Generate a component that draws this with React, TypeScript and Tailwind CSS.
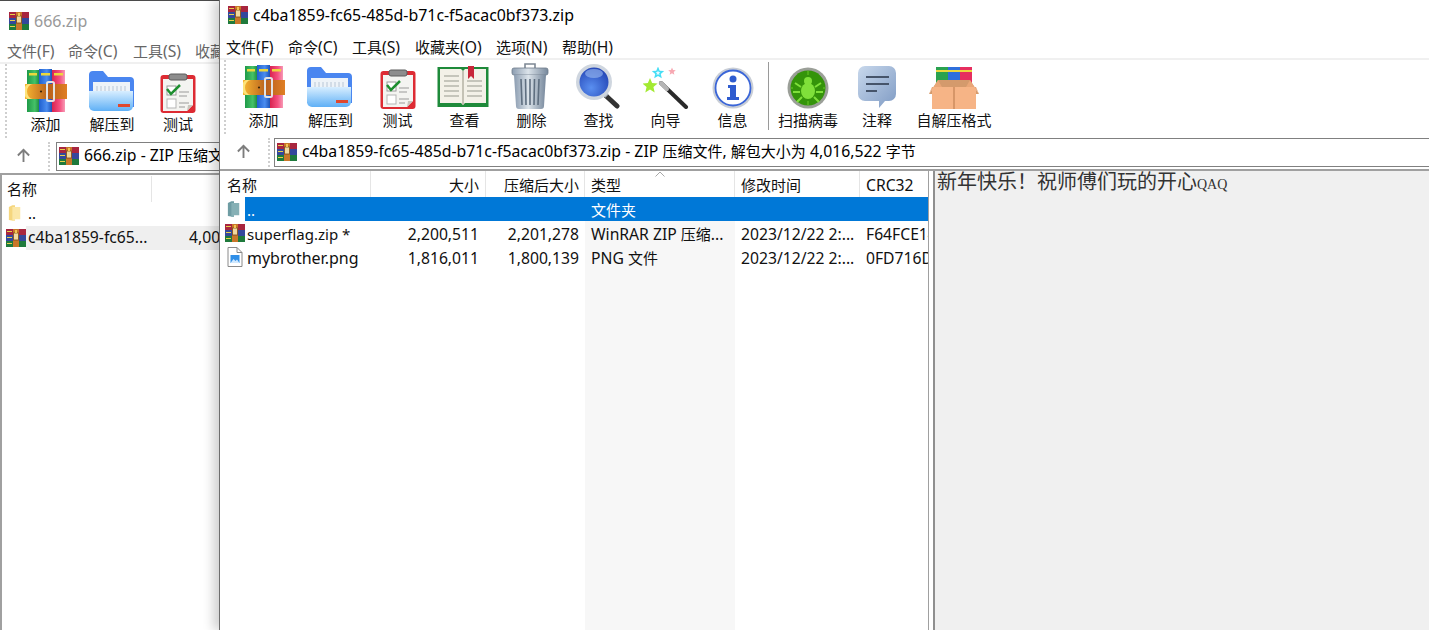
import type { ReactNode } from 'react';

const uiFont = { fontFamily: '"Noto Sans", "Noto Sans CJK SC", sans-serif' };

// Latin runs sit a little larger than CJK runs in the original UI font
function Mixed({ text, latin = 'text-[15.7px]' }: { text: string; latin?: string }) {
  return (
    <>
      {text.split(/([\u4e00-\u9fff]+)/).map((part, i) =>
        i % 2 === 1 ? (
          <span key={i} className="text-[15px]">{part}</span>
        ) : (
          <span key={i} className={latin}>{part}</span>
        ),
      )}
    </>
  );
}

function starPoints(cx: number, cy: number, r: number) {
  const pts: string[] = [];
  for (let i = 0; i < 10; i++) {
    const a = -Math.PI / 2 + (i * Math.PI) / 5;
    const d = i % 2 === 0 ? r : r * 0.45;
    pts.push(`${cx + d * Math.cos(a)},${cy + d * Math.sin(a)}`);
  }
  return pts.join(' ');
}

function RarSmall({ className }: { className?: string }) {
  return (
    <svg viewBox="0 0 20 18" className={className}>
      <rect x="0" y="0" width="20" height="6" fill="#a8263f" />
      <rect x="0" y="6" width="20" height="6" fill="#34489c" />
      <rect x="0" y="12" width="20" height="6" fill="#1f7a3c" />
      <rect x="1" y="2" width="5" height="1" fill="#e8d24a" />
      <rect x="1" y="8" width="5" height="1" fill="#e8d24a" />
      <rect x="1" y="14" width="5" height="1" fill="#e8d24a" />
      <rect x="7" y="0" width="6" height="18" fill="#c9772a" />
      <rect x="7.5" y="4" width="5" height="7" fill="#f1d9a0" stroke="#7a4a18" strokeWidth="0.8" />
      <rect x="9" y="1" width="2" height="3" fill="#f3c552" />
    </svg>
  );
}

function RarIcon() {
  return (
    <svg viewBox="0 0 42 44" className="h-[44px] w-[42px]">
      <defs>
        <linearGradient id="belt" x1="0" y1="0" x2="1" y2="0">
          <stop offset="0" stopColor="#f7b733" />
          <stop offset="0.55" stopColor="#b8601c" />
          <stop offset="1" stopColor="#e07f24" />
        </linearGradient>
        <linearGradient id="bkg" x1="0" y1="0" x2="1" y2="0">
          <stop offset="0" stopColor="#1f9a48" />
          <stop offset="0.6" stopColor="#45c268" />
          <stop offset="1" stopColor="#17803a" />
        </linearGradient>
        <linearGradient id="bkb" x1="0" y1="0" x2="1" y2="0">
          <stop offset="0" stopColor="#1f5fcf" />
          <stop offset="0.6" stopColor="#4b8df0" />
          <stop offset="1" stopColor="#1c52b6" />
        </linearGradient>
        <linearGradient id="bkr" x1="0" y1="0" x2="1" y2="0">
          <stop offset="0" stopColor="#d8234f" />
          <stop offset="0.6" stopColor="#f55080" />
          <stop offset="1" stopColor="#f79ab5" />
        </linearGradient>
      </defs>
      <rect x="2" y="1" width="13" height="42" fill="url(#bkg)" />
      <rect x="14" y="0" width="13" height="43" fill="url(#bkb)" />
      <rect x="27" y="1" width="13" height="42" fill="url(#bkr)" />
      <rect x="4" y="4" width="8" height="2.5" fill="#ecd83c" />
      <rect x="16" y="4" width="9" height="2.5" fill="#ecd83c" />
      <rect x="29" y="4" width="9" height="2.5" fill="#ecd83c" />
      <rect x="0" y="15" width="42" height="15" fill="url(#belt)" />
      <path d="M8 15a6 7.500 0 0 0 0 15H4a5 7.500 0 0 1 0-15z" fill="#fde37a" />
      <rect x="22" y="13" width="7" height="19" rx="1.500" fill="none" stroke="#e2e2e2" strokeWidth="2" />
      <circle cx="16" cy="22.500" r="1.100" fill="#3b2408" />
    </svg>
  );
}

function ExtractIcon() {
  return (
    <svg viewBox="0 0 46 42" className="-ml-[3px] mb-[1px] h-[42px] w-[46px]">
      <defs>
        <linearGradient id="fold" x1="0" y1="0" x2="0" y2="1">
          <stop offset="0" stopColor="#d8eeff" />
          <stop offset="1" stopColor="#5fb0f6" />
        </linearGradient>
      </defs>
      <path d="M1 5a4 4 0 0 1 4-4h10l5 6h22a4 4 0 0 1 4 4v26H1z" fill="#4a86f0" />
      <rect x="5" y="12" width="37" height="14" fill="#eef3f8" />
      <path d="M9 16v5M13 16v5M17 16v5M21 16v5M25 16v5M29 16v5M33 16v5M37 16v5" stroke="#b8c6d6" strokeWidth="1" />
      <path d="M1 21h44v15a5 5 0 0 1-5 5H6a5 5 0 0 1-5-5z" fill="url(#fold)" />
      <rect x="30" y="34" width="12" height="3" fill="#e0482e" />
    </svg>
  );
}

function TestIcon() {
  return (
    <svg viewBox="0 0 36 40" className="h-[40px] w-[36px]">
      <rect x="0.5" y="2" width="35" height="38" rx="3" fill="#dd2b33" />
      <path d="M3 6h30v26l-6 6H3z" fill="#f4f4f1" />
      <path d="M33 32l-6 6 1-6z" fill="#c9c6bd" />
      <rect x="9" y="1" width="18" height="6" rx="2" fill="#8d8d8d" stroke="#5c5c5c" />
      <rect x="7" y="13" width="9" height="9" fill="#fff" stroke="#9a9a9a" />
      <rect x="7" y="26" width="9" height="9" fill="#fff" stroke="#b5b5b5" />
      <path d="M7 16l4 5 9-9" fill="none" stroke="#1e8f2f" strokeWidth="2.5" />
      <path d="M19 19h10M19 23h8M19 30h10M19 34h6" stroke="#9a9a9a" strokeWidth="1.2" />
    </svg>
  );
}

function BookIcon() {
  return (
    <svg viewBox="0 0 52 42" className="-ml-[3px] mb-[1px] h-[42px] w-[52px]">
      <rect x="0.5" y="1" width="51" height="40" fill="#1e8a3a" />
      <path d="M3 3h21l2 2 2-2h21v34H28l-2 2-2-2H3z" fill="#f3f1e8" />
      <path d="M26 5v34" stroke="#b5b2a5" strokeWidth="1.5" />
      <path d="M7 10h15M7 15h15M7 20h15M7 25h15M7 30h15M30 15h15M30 20h15M30 25h15M30 30h15" stroke="#b7b6ac" strokeWidth="1.3" />
      <path d="M31 0h6v13l-3-3-3 3z" fill="#c8273a" />
    </svg>
  );
}

function TrashIcon() {
  return (
    <svg viewBox="0 0 38 46" className="-ml-[3px] h-[46px] w-[38px]">
      <defs>
        <linearGradient id="can" x1="0" y1="0" x2="1" y2="0">
          <stop offset="0" stopColor="#8b9cb0" />
          <stop offset="0.45" stopColor="#dbe3ea" />
          <stop offset="1" stopColor="#77889c" />
        </linearGradient>
      </defs>
      <path d="M14 5V1h10v4" fill="none" stroke="#7d8894" strokeWidth="1.6" />
      <rect x="1" y="5" width="36" height="7" rx="2" fill="url(#can)" stroke="#6e7c8b" strokeWidth="0.8" />
      <path d="M3 12h32l-2 31a3 3 0 0 1-3 3H8a3 3 0 0 1-3-3z" fill="url(#can)" />
      <path d="M10 16l1 26M19 16v26M28 16l-1 26M14.5 16l.5 26M23.5 16l-.5 26" stroke="#5f6f80" strokeWidth="1.6" />
    </svg>
  );
}

function SearchIcon() {
  return (
    <svg viewBox="0 0 46 46" className="-ml-[3px] h-[46px] w-[46px]">
      <defs>
        <radialGradient id="lens" cx="0.4" cy="0.7" r="0.8">
          <stop offset="0" stopColor="#5a8ff0" />
          <stop offset="1" stopColor="#1f3fb0" />
        </radialGradient>
      </defs>
      <path d="M29 30l14 13" stroke="#333" strokeWidth="5" strokeLinecap="round" />
      <path d="M27 27l6 6" stroke="#aab2bd" strokeWidth="5" />
      <circle cx="20" cy="19" r="18" fill="#cfd6df" />
      <circle cx="20" cy="19" r="14.500" fill="url(#lens)" />
      <ellipse cx="20" cy="10.500" rx="9" ry="4.500" fill="#9cbcf2" opacity="0.6" />
    </svg>
  );
}

function WizardIcon() {
  return (
    <svg viewBox="0 0 46 42" className="h-[42px] w-[46px]">
      <path d="M18 16l25 24" stroke="#2a2a2a" strokeWidth="4" strokeLinecap="round" />
      <path d="M18 16l6 6" stroke="#b5b5b5" strokeWidth="4" strokeLinecap="round" />
      <polygon points={starPoints(7, 19, 8)} fill="#a3ea32" />
      <polygon points={starPoints(15, 6, 6.500)} fill="#45def5" />
      <polygon points={starPoints(15, 6, 2.500)} fill="#e6fbff" />
      <polygon points={starPoints(29, 4.500, 4)} fill="#f7a8b2" />
    </svg>
  );
}

function InfoIcon() {
  return (
    <svg viewBox="0 0 42 42" className="h-[42px] w-[42px]">
      <circle cx="21" cy="21" r="20.500" fill="#c9ced6" />
      <circle cx="21" cy="21" r="17.500" fill="#fff" stroke="#3b66d8" strokeWidth="1.8" />
      <circle cx="21" cy="12" r="3.500" fill="#2f5ccf" />
      <path d="M16 18h8v12h3v3H15v-3h3v-9h-2z" fill="#2f5ccf" />
    </svg>
  );
}

function VirusIcon() {
  return (
    <svg viewBox="0 0 42 42" className="h-[42px] w-[42px]">
      <circle cx="21" cy="21" r="20.500" fill="#9b9f98" />
      <circle cx="21" cy="21" r="17.500" fill="#34940a" />
      <ellipse cx="21" cy="24" rx="7" ry="8" fill="#7fe03a" />
      <circle cx="21" cy="14" r="4" fill="#7fe03a" />
      <path d="M14 20l-6-4M28 20l6-4M13 25H6M29 25h7M15 30l-5 5M27 30l5 5" stroke="#7fe03a" strokeWidth="2" />
      <path d="M21 4v4M21 34v4M4 21h2M36 21h2" stroke="#58b81f" strokeWidth="1.500" />
    </svg>
  );
}

function CommentIcon() {
  return (
    <svg viewBox="0 0 40 44" className="h-[44px] w-[40px]">
      <defs>
        <linearGradient id="bub" x1="0" y1="0" x2="1" y2="1">
          <stop offset="0" stopColor="#c8d8ec" />
          <stop offset="1" stopColor="#7f9bc4" />
        </linearGradient>
      </defs>
      <path d="M8 1h24a7 7 0 0 1 7 7v21a7 7 0 0 1-7 7h-4l-6 7v-7H8a7 7 0 0 1-7-7V8a7 7 0 0 1 7-7z" fill="url(#bub)" />
      <path d="M9 12h23M9 19h23M9 26h11" stroke="#46546a" strokeWidth="2" />
    </svg>
  );
}

function SfxIcon() {
  return (
    <svg viewBox="0 0 50 42" className="h-[42px] w-[50px]">
      <rect x="7" y="0" width="12" height="16" fill="#2aa24f" />
      <rect x="19" y="0" width="12" height="16" fill="#2e6fdc" />
      <rect x="31" y="0" width="12" height="16" fill="#e62e5f" />
      <rect x="7" y="3" width="36" height="2" fill="#ecd83c" />
      <path d="M9 13h32l9 14H0z" fill="#d49a6c" />
      <path d="M3 20h44v22H3z" fill="#f6b486" />
      <path d="M25 20v22" stroke="#b8784a" strokeWidth="1" />
      <path d="M0 27l9-14 4 7H3zM50 27l-9-14-4 7h10z" fill="#e9a677" />
    </svg>
  );
}

function Tool({ icon, label, className }: { icon: ReactNode; label: string; className?: string }) {
  return (
    <div className={`flex h-full flex-col items-center ${className ?? 'w-[67px]'}`}>
      <div className="flex h-[49px] items-end justify-center">{icon}</div>
      <span className="mt-[1px] whitespace-nowrap text-[15px] leading-[20px] text-[#111]">{label}</span>
    </div>
  );
}

function Gripper() {
  return <div className="h-full w-0 shrink-0 border-l-2 border-dotted border-[#cfcfcf]" />;
}

function UpArrow() {
  return (
    <svg viewBox="0 0 16 16" className="mb-[3px] mr-[2px] h-[15px] w-[15px]">
      <path d="M8 15V2M2 8l6-6 6 6" fill="none" stroke="#7d7d7d" strokeWidth="2" />
    </svg>
  );
}

function AddressBar({ text, className }: { text: string; className?: string }) {
  return (
    <div className={`flex h-[29px] items-center whitespace-nowrap border border-r-0 border-[#808080] bg-white pb-[2px] pl-[2px] text-black ${className ?? ''}`}>
      <RarSmall className="h-[18px] w-[20px] shrink-0" />
      <span className="ml-[5px]"><Mixed text={text} latin="text-[15.8px]" /></span>
    </div>
  );
}

function Menu({ items, className }: { items: { label: string; w: string }[]; className: string }) {
  return (
    <div className={`flex items-center whitespace-nowrap leading-[20px] ${className}`}>
      {items.map((m) => (
        <span key={m.label} className={`shrink-0 ${m.w}`}><Mixed text={m.label} /></span>
      ))}
    </div>
  );
}

function BackWindow() {
  return (
    <div className="absolute left-0 top-0 flex h-full w-[300px] flex-col overflow-hidden border-t border-[#4b4b4b] bg-white" style={uiFont}>
      <div className="flex h-[40px] shrink-0 items-center pl-[9px]">
        <RarSmall className="h-[18px] w-[20px]" />
        <span className="ml-[5px] text-[16px] text-[#999]">666.zip</span>
      </div>
      <Menu
        className="h-[20px] shrink-0 pl-[7px] text-[#666]"
        items={[
          { label: '文件(F)', w: 'w-[61px]' },
          { label: '命令(C)', w: 'w-[65px]' },
          { label: '工具(S)', w: 'w-[62px]' },
          { label: '收藏夹(O)', w: 'w-[70px]' },
        ]}
      />
      <div className="mt-[1px] h-[2px] shrink-0 bg-[#f0f0f0]" />
      <div className="flex h-[74px] shrink-0 items-stretch pl-[5px]">
        <Gripper />
        <Tool icon={<RarIcon />} label="添加" className="w-[67px] pl-[10px]" />
        <Tool icon={<ExtractIcon />} label="解压到" className="w-[66px] pl-[10px]" />
        <Tool icon={<TestIcon />} label="测试" className="w-[68px] pl-[8px]" />
      </div>
      <div className="mt-[4px] flex h-[29px] shrink-0 items-center">
        <div className="flex w-[48px] shrink-0 justify-center"><UpArrow /></div>
        <Gripper />
        <AddressBar text="666.zip - ZIP 压缩文件, 解包大小为 4,016,522 字节" className="ml-[6px] w-[300px] shrink-0" />
      </div>
      <div className="mt-[2px] flex-1 border-l-2 border-t-2 border-[#a0a0a0]">
        <div className="flex h-[27px] items-center text-[15px] text-[#111]">
          <span className="w-[150px] border-r border-[#e5e5e5] pl-[5px] leading-[26px]">名称</span>
        </div>
        <div className="flex h-[24px] items-center pb-[2px] text-[15px]">
          <svg viewBox="0 0 16 20" className="ml-[6px] h-[20px] w-[14px]">
            <path d="M1 3l4-2h3v18l-7-1z" fill="#f5d67e" />
            <path d="M5 3h9v14H8v2H5z" fill="#fbe7a8" />
          </svg>
          <span className="ml-[6px]">..</span>
        </div>
        <div className="flex h-[24px] items-center text-[#111]">
          <RarSmall className="ml-[4px] h-[18px] w-[20px]" />
          <div className="flex h-full flex-1 items-center bg-[#efefef] pl-[2px]">
            <span className="w-[161px] text-[15.7px]">c4ba1859-fc65...</span>
            <span className="text-[15.7px]">4,001,417</span>
          </div>
        </div>
      </div>
    </div>
  );
}

type Row = {
  icon: ReactNode;
  name: string;
  nameSize: string;
  size: string;
  packed: string;
  type: string;
  time: string;
  crc: string;
  selected?: boolean;
};

const rows: Row[] = [
  {
    icon: (
      <svg viewBox="0 0 16 20" className="ml-[7px] mr-[4px] h-[20px] w-[14px] shrink-0">
        <path d="M1 3l4-2h3v18l-7-1z" fill="#6e9ca3" />
        <path d="M5 3h9v14H8v2H5z" fill="#86b0b5" />
      </svg>
    ),
    name: '..',
    nameSize: 'text-[15px]',
    size: '',
    packed: '',
    type: '文件夹',
    time: '',
    crc: '',
    selected: true,
  },
  {
    icon: <RarSmall className="ml-[5px] h-[18px] w-[20px] shrink-0" />,
    name: 'superflag.zip *',
    nameSize: 'text-[15px]',
    size: '2,200,511',
    packed: '2,201,278',
    type: 'WinRAR ZIP 压缩...',
    time: '2023/12/22 2:...',
    crc: 'F64FCE14',
  },
  {
    icon: (
      <svg viewBox="0 0 16 20" className="ml-[7px] mr-[2px] h-[20px] w-[16px] shrink-0">
        <path d="M1 .5h9l5 5v14H1z" fill="#fff" stroke="#8a8a8a" />
        <path d="M10 .5v5h5" fill="none" stroke="#8a8a8a" />
        <rect x="3.500" y="8" width="9" height="8" fill="#2f8fe8" />
        <path d="M3.500 16l3-4 2 2 1.500-1.500 2.500 3.500z" fill="#cfe8ff" />
      </svg>
    ),
    name: 'mybrother.png',
    nameSize: 'text-[16px]',
    size: '1,816,011',
    packed: '1,800,139',
    type: 'PNG 文件',
    time: '2023/12/22 2:...',
    crc: '0FD716DB',
  },
];

function FileTable() {
  return (
    <div className="flex w-[709px] shrink-0 flex-col overflow-hidden border-r border-[#a0a0a0] text-[#111]">
      <div className="flex h-[26px] shrink-0 items-center text-[15px]">
        <div className="h-full w-[151px] border-r border-[#e5e5e5] pl-[7px] leading-[28px]">名称</div>
        <div className="h-full w-[115px] border-r border-[#e5e5e5] pr-[6px] text-right leading-[28px]">大小</div>
        <div className="h-full w-[99px] border-r border-[#e5e5e5] pr-[5px] text-right leading-[28px]">压缩后大小</div>
        <div className="relative h-full w-[150px] border-r border-[#e5e5e5] pl-[6px] leading-[28px]">
          类型
          <svg viewBox="0 0 10 6" className="absolute left-[70px] top-0 h-[6px] w-[10px]">
            <path d="M.5 5.500L5 1l4.500 4.500" fill="none" stroke="#a8a8a8" />
          </svg>
        </div>
        <div className="h-full w-[125px] border-r border-[#e5e5e5] pl-[6px] leading-[28px]">修改时间</div>
        <div className="h-full flex-1 pl-[6px] leading-[28px] text-[15.7px]">CRC32</div>
      </div>
      {rows.map((r) => (
        <div key={r.name} className="flex h-[24px] shrink-0 items-center whitespace-nowrap">
          <div className="flex h-full w-[151px] items-center overflow-hidden">
            {r.icon}
            <span className={`flex h-full flex-1 items-center pl-[2px] pt-[2px] ${r.nameSize} ${r.selected ? 'bg-[#0078d7] text-white' : ''}`}>{r.name}</span>
          </div>
          <div className={`h-full w-[115px] pr-[7px] text-right text-[15.7px] leading-[26px] ${r.selected ? 'bg-[#0078d7]' : ''}`}>{r.size}</div>
          <div className={`h-full w-[99px] pr-[6px] text-right text-[15.7px] leading-[26px] ${r.selected ? 'bg-[#0078d7]' : ''}`}>{r.packed}</div>
          <div className={`h-full w-[150px] pl-[6px] leading-[26px] ${r.selected ? 'bg-[#0078d7] text-white' : 'bg-[#f7f7f7]'}`}><Mixed text={r.type} /></div>
          <div className={`h-full w-[125px] pl-[6px] text-[15.7px] leading-[26px] ${r.selected ? 'bg-[#0078d7]' : ''}`}>{r.time}</div>
          <div className={`h-full min-w-0 flex-1 overflow-hidden pl-[6px] text-[15.7px] leading-[26px] ${r.selected ? 'bg-[#0078d7]' : ''}`}>{r.crc}</div>
        </div>
      ))}
      <div className="flex flex-1">
        <div className="ml-[365px] w-[150px] bg-[#f7f7f7]" />
      </div>
    </div>
  );
}

function FrontWindow() {
  return (
    <div className="absolute bottom-0 left-[219px] right-0 top-0 flex flex-col border-l border-[#6e6e6e] bg-white shadow-[-6px_0_10px_rgba(0,0,0,0.18)]" style={uiFont}>
      <div className="flex h-[30px] shrink-0 items-center pl-[8px]">
        <RarSmall className="h-[18px] w-[20px]" />
        <span className="ml-[5px] pt-[2px] text-[15.9px] text-black">c4ba1859-fc65-485d-b71c-f5acac0bf373.zip</span>
      </div>
      <Menu
        className="mt-[7px] h-[20px] shrink-0 pl-[6px] text-[#111]"
        items={[
          { label: '文件(F)', w: 'w-[62px]' },
          { label: '命令(C)', w: 'w-[64px]' },
          { label: '工具(S)', w: 'w-[63px]' },
          { label: '收藏夹(O)', w: 'w-[81px]' },
          { label: '选项(N)', w: 'w-[66px]' },
          { label: '帮助(H)', w: 'w-[66px]' },
        ]}
      />
      <div className="mt-[1px] h-[2px] shrink-0 bg-[#f0f0f0]" />
      <div className="flex h-[74px] shrink-0 items-stretch pl-[4px]">
        <Gripper />
        <div className="flex h-full items-stretch pl-[4px]">
          <Tool icon={<RarIcon />} label="添加" />
          <Tool icon={<ExtractIcon />} label="解压到" />
          <Tool icon={<TestIcon />} label="测试" />
          <Tool icon={<BookIcon />} label="查看" />
          <Tool icon={<TrashIcon />} label="删除" />
          <Tool icon={<SearchIcon />} label="查找" />
          <Tool icon={<WizardIcon />} label="向导" />
          <Tool icon={<InfoIcon />} label="信息" />
        </div>
        <div className="ml-[2px] mr-[1px] mt-[2px] h-[68px] w-px bg-[#9a9a9a]" />
        <Tool icon={<VirusIcon />} label="扫描病毒" className="w-[76px]" />
        <Tool icon={<CommentIcon />} label="注释" className="w-[62px]" />
        <Tool icon={<SfxIcon />} label="自解压格式" className="w-[92px]" />
      </div>
      <div className="mt-[4px] flex h-[29px] shrink-0 items-center">
        <div className="flex w-[48px] shrink-0 justify-center"><UpArrow /></div>
        <Gripper />
        <AddressBar text="c4ba1859-fc65-485d-b71c-f5acac0bf373.zip - ZIP 压缩文件, 解包大小为 4,016,522 字节" className="ml-[4px] flex-1" />
      </div>
      <div className="mt-[2px] flex min-h-0 flex-1 border-t-2 border-[#a0a0a0]">
        <FileTable />
        <div className="w-[4px] shrink-0 bg-white" />
        <div className="flex-1 border-l-2 border-[#8f8f8f] bg-[#f0f0f0] pl-[2px] pt-[2px] text-[20px] leading-[15px] text-[#333]">
          <span style={{ fontFamily: '"Noto Sans CJK SC", sans-serif' }}>新年快乐！祝师傅们玩的开心</span>
          <span className="text-[14px]" style={{ fontFamily: '"Liberation Serif", serif' }}>QAQ</span>
        </div>
      </div>
    </div>
  );
}

export default function App() {
  return (
    <div className="relative h-[630px] w-[1429px] overflow-hidden bg-white">
      <BackWindow />
      <FrontWindow />
    </div>
  );
}
